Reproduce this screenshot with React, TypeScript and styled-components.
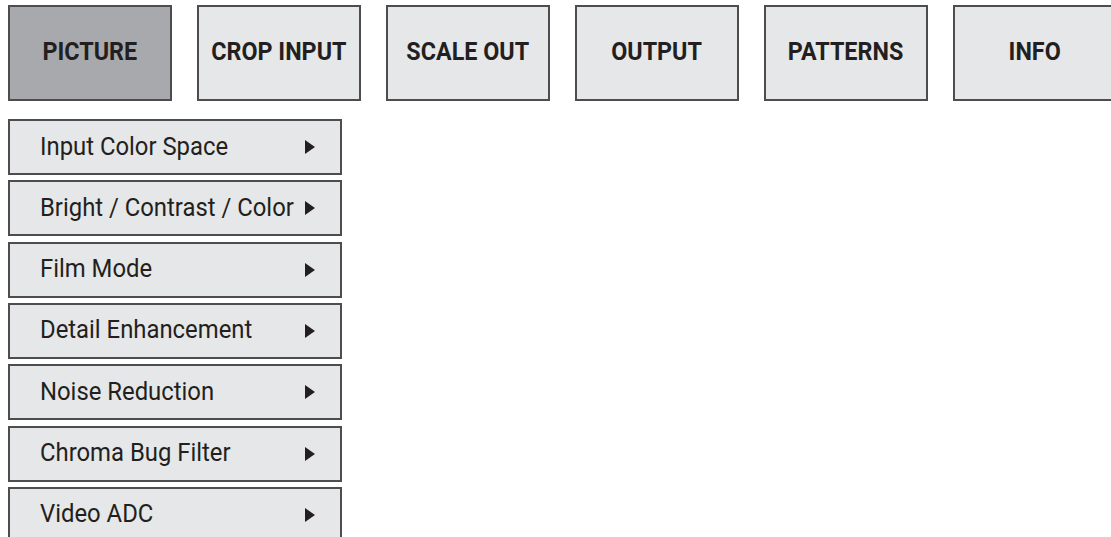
import React from "react";
import styled, { createGlobalStyle } from "styled-components";

const Global = createGlobalStyle`
  html, body { margin: 0; padding: 0; background: #ffffff; overflow: hidden; }
  body { font-family: "Roboto", "Liberation Sans", sans-serif; }
`;

const Page = styled.div`
  display: flex;
  flex-direction: column;
  gap: 18px;
  padding: 5px 0 0 8px;
  width: 1111px;
  height: 537px;
  box-sizing: border-box;
`;

const TabBar = styled.div`
  display: flex;
  gap: 25px;
`;

const Tab = styled.div<{ $active?: boolean }>`
  flex: 0 0 164px;
  height: 96px;
  box-sizing: border-box;
  border: 2px solid #4d4d4f;
  background: ${(p) => (p.$active ? "#a7a9ac" : "#e6e7e8")};
  display: flex;
  align-items: center;
  justify-content: center;
  padding-bottom: 5px;
`;

const TabText = styled.span`
  font-weight: 700;
  font-size: 26.5px;
  color: #231f20;
  white-space: nowrap;
  transform: scaleX(0.88);
  transform-origin: center;
`;

const Menu = styled.div`
  display: flex;
  flex-direction: column;
  gap: 5.33px;
  width: 334px;
`;

const Item = styled.div`
  height: 56px;
  box-sizing: border-box;
  border: 2px solid #4d4d4f;
  background: #e6e7e8;
  display: flex;
  align-items: center;
  padding: 0 25px 0 30px;
  color: #231f20;
`;

const Label = styled.span`
  flex: 1 1 0;
  min-width: 0;
  white-space: nowrap;
  font-size: 26.5px;
  margin-top: -4px;
  transform: scaleX(0.9);
  transform-origin: left center;
`;

const Arrow = styled.span`
  width: 0;
  height: 0;
  border-top: 7px solid transparent;
  border-bottom: 7px solid transparent;
  border-left: 10px solid #231f20;
  flex-shrink: 0;
`;

const tabs = ["PICTURE", "CROP INPUT", "SCALE OUT", "OUTPUT", "PATTERNS", "INFO"];
const items = [
  "Input Color Space",
  "Bright / Contrast / Color",
  "Film Mode",
  "Detail Enhancement",
  "Noise Reduction",
  "Chroma Bug Filter",
  "Video ADC",
];

export default function App() {
  return (
    <>
      <Global />
      <Page>
        <TabBar>
          {tabs.map((t, i) => (
            <Tab key={t} $active={i === 0}>
              <TabText>{t}</TabText>
            </Tab>
          ))}
        </TabBar>
        <Menu>
          {items.map((t) => (
            <Item key={t}>
              <Label>{t}</Label>
              <Arrow />
            </Item>
          ))}
        </Menu>
      </Page>
    </>
  );
}
